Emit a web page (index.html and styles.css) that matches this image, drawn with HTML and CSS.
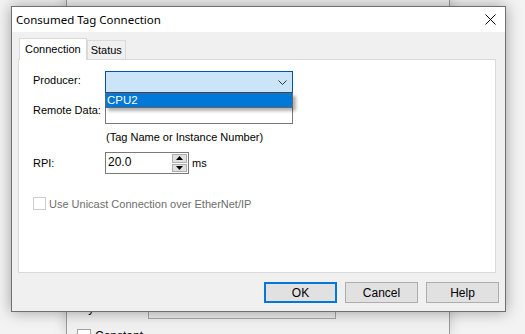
FILE: index.html
```html
<!DOCTYPE html>
<html lang="en">
<head>
    <meta charset="UTF-8">
    <title>Consumed Tag Connection</title>
    <link rel="stylesheet" href="styles.css">
</head>
<body>
    <!-- janela de fundo (propriedades da tag) -->
    <div class="back-window">
        <div class="back-row">
            <span class="back-label">Style:</span>
            <div class="back-select">Decimal</div>
        </div>
        <div class="back-row back-check-row">
            <span class="back-check"></span>
            <span>Constant</span>
        </div>
    </div>

    <div class="dialog">
        <div class="titlebar">
            <span class="title">Consumed Tag Connection</span>
            <svg class="close" width="11" height="11" viewBox="0 0 11 11">
                <path d="M0.5 0.5 L10.5 10.5 M10.5 0.5 L0.5 10.5" stroke="#000" stroke-width="1" fill="none"/>
            </svg>
        </div>

        <div class="dialog-body">
            <div class="tabs">
                <div class="tab active">Connection</div>
                <div class="tab">Status</div>
            </div>

            <div class="tab-panel">
                <div class="row">
                    <label class="label">Producer:</label>
                    <div class="combo">
                        <svg class="chevron" width="9" height="5" viewBox="0 0 9 5">
                            <path d="M0.5 0.5 L4.5 4.5 L8.5 0.5" stroke="#333" stroke-width="1" fill="none"/>
                        </svg>
                        <div class="dropdown">
                            <div class="option selected">CPU2</div>
                        </div>
                    </div>
                </div>

                <div class="row row-remote">
                    <label class="label">Remote Data:</label>
                    <div class="textbox"></div>
                </div>

                <div class="hint">(Tag Name or Instance Number)</div>

                <div class="row row-rpi">
                    <label class="label label-rpi">RPI:</label>
                    <div class="spinner">
                        <span class="spin-value">20.0</span>
                        <div class="spin-buttons">
                            <div class="spin-btn">
                                <svg width="7" height="4" viewBox="0 0 7 4"><path d="M3.5 0 L7 4 L0 4 Z" fill="#000"/></svg>
                            </div>
                            <div class="spin-btn">
                                <svg width="7" height="4" viewBox="0 0 7 4"><path d="M0 0 L7 0 L3.5 4 Z" fill="#000"/></svg>
                            </div>
                        </div>
                    </div>
                    <span class="unit">ms</span>
                </div>

                <div class="check-row">
                    <span class="checkbox"></span>
                    <span class="check-text">Use Unicast Connection over EtherNet/IP</span>
                </div>
            </div>

            <div class="buttons">
                <button class="btn default">OK</button>
                <button class="btn">Cancel</button>
                <button class="btn">Help</button>
            </div>
        </div>
    </div>
</body>
</html>
```

FILE: styles.css
```css
body {
    margin: 0;
    width: 525px;
    height: 334px;
    overflow: hidden;
    position: relative;
    background: #f3f3f3;
    font-family: 'Liberation Sans', Arial, sans-serif;
    font-size: 11px;
    color: #000;
}

/* janela atras do dialogo */
.back-window {
    position: absolute;
    left: 66px;
    top: -10px;
    width: 384px;
    height: 344px;
    background: #f0f0f0;
    border-left: 1px solid #9a9a9a;
    border-right: 1px solid #9a9a9a;
    box-shadow: 0 0 12px rgba(0, 0, 0, 0.18);
    padding-top: 307px;
    box-sizing: border-box;
    overflow: hidden;
}

.back-row {
    display: flex;
    align-items: center;
    padding-left: 10px;
    height: 22px;
}

.back-label {
    width: 71px;
    font-size: 12px;
}

.back-select {
    width: 182px;
    height: 20px;
    border: 1px solid #a8a8a8;
    background: #ececec;
    font-size: 12px;
    line-height: 20px;
    padding-left: 4px;
}

.back-check-row {
    margin-top: 10px;
    gap: 4px;
    font-size: 12px;
    align-items: flex-start;
}

.back-check {
    width: 12px;
    height: 12px;
    border: 1px solid #a0a0a0;
    background: #fff;
}

/* dialogo principal */
.dialog {
    position: absolute;
    left: 11px;
    top: 6px;
    width: 493px;
    height: 304px;
    border: 1px solid #6f6f6f;
    background: #f0f0f0;
    box-shadow: 0 0 14px rgba(0, 0, 0, 0.35);
    display: flex;
    flex-direction: column;
}

.titlebar {
    flex-shrink: 0;
    height: 25px;
    background: #fff;
    display: flex;
    align-items: center;
    justify-content: space-between;
    padding: 0 8px 0 4px;
}

.title {
    font-family: 'Noto Sans', sans-serif;
    font-size: 11.5px;
}

.close {
    margin-right: 1px;
}

.dialog-body {
    flex: 1;
    display: flex;
    flex-direction: column;
    padding: 7px 5px 6px 6px;
}

.tabs {
    display: flex;
    align-items: flex-end;
    height: 20px;
    padding-left: 1px;
}

.tab {
    height: 18px;
    line-height: 18px;
    padding: 0 3px;
    border: 1px solid #d9d9d9;
    border-bottom: none;
    background: #f0f0f0;
    font-size: 11px;
}

.tab.active {
    height: 21px;
    line-height: 20px;
    padding: 0 5px;
    background: #fff;
    margin-bottom: -1px;
    position: relative;
    z-index: 1;
}

.tab-panel {
    height: 201px;
    margin-right: 4px;
    border: 1px solid #d9d9d9;
    background: #fff;
    padding: 11px 0 0 14px;
    display: flex;
    flex-direction: column;
}

.row {
    display: flex;
    align-items: flex-start;
}

.label {
    width: 72px;
    padding-top: 3px;
    line-height: 13px;
}

.combo {
    position: relative;
    width: 186px;
    height: 20px;
    border: 1px solid #0054a6;
    background: #cce4f7;
}

.chevron {
    position: absolute;
    right: 5px;
    top: 8px;
}

.dropdown {
    position: absolute;
    left: -1px;
    top: 21px;
    width: 186px;
    border: 1px solid #646464;
    background: #fff;
    box-shadow: 3px 3px 3px rgba(0, 0, 0, 0.3);
    z-index: 2;
}

.option {
    height: 13px;
    line-height: 13px;
    padding-left: 1px;
    font-size: 11.5px;
}

.option.selected {
    background: #0078d7;
    color: #fff;
}

.row-remote {
    margin-top: 8px;
}

.textbox {
    width: 186px;
    height: 21px;
    border: 1px solid #7a7a7a;
    background: #fff;
}

.hint {
    margin: 7px 0 0 73px;
    line-height: 13px;
}

.row-rpi {
    margin-top: 8px;
    align-items: center;
}

.label-rpi {
    padding-top: 1px;
}

.spinner {
    display: flex;
    width: 82px;
    height: 20px;
    border: 1px solid #7a7a7a;
    background: #fff;
}

.spin-value {
    flex: 1;
    padding: 3px 0 0 2px;
    font-size: 12px;
    line-height: 13px;
}

.spin-buttons {
    display: flex;
    flex-direction: column;
    gap: 1px;
    padding: 1px;
}

.spin-btn {
    width: 13px;
    height: 7px;
    border: 1px solid #adadad;
    background: #e1e1e1;
    display: flex;
    align-items: center;
    justify-content: center;
}

.unit {
    margin-left: 3px;
}

.check-row {
    display: flex;
    align-items: center;
    margin-top: 23px;
    gap: 3px;
}

.checkbox {
    width: 11px;
    height: 11px;
    border: 1px solid #cccccc;
    background: #fff;
}

.check-text {
    color: #6d6d6d;
}

.buttons {
    display: flex;
    justify-content: flex-end;
    gap: 8px;
    margin-top: 9px;
    padding-right: 1px;
}

.btn {
    width: 73px;
    height: 21px;
    margin: 0;
    padding: 0;
    border: 1px solid #adadad;
    background: #e1e1e1;
    font-family: 'Liberation Sans', Arial, sans-serif;
    font-size: 12px;
    color: #000;
}

.btn.default {
    border: 2px solid #0078d7;
}
```
